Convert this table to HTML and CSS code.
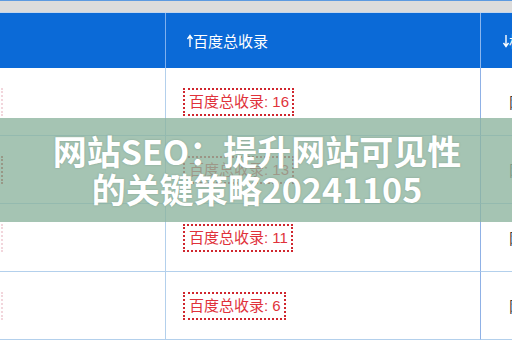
FILE: index.html
```html
<!DOCTYPE html>
<html lang="zh-CN">
<head>
<meta charset="utf-8">
<title>网站SEO</title>
<link rel="stylesheet" href="styles.css">
</head>
<body>
<div class="page">
  <div class="topbar"></div>
  <div class="table">
    <div class="cell head c1"></div>
    <div class="cell head c2"><svg class="arrow" width="6" height="14" viewBox="0 0 6 14"><path d="M3 13V2M0.5 5L3 1.5L5.5 5" fill="none" stroke="#fff" stroke-width="1.4"/></svg>百度总收录</div>
    <div class="cell head c3"><svg class="arrow" width="6" height="14" viewBox="0 0 6 14"><path d="M3 1V12M0.5 9L3 12.5L5.5 9" fill="none" stroke="#fff" stroke-width="1.4"/></svg>标题</div>

    <div class="cell c1"><span class="stub"></span></div>
    <div class="cell c2"><span class="tag">百度总收录: 16</span></div>
    <div class="cell c3"><span class="txt">网站</span></div>

    <div class="cell c1"><span class="stub strong"></span></div>
    <div class="cell c2"><span class="tag">百度总收录: 13</span></div>
    <div class="cell c3"><span class="txt">网站</span></div>

    <div class="cell c1"><span class="stub"></span></div>
    <div class="cell c2"><span class="tag">百度总收录: 11</span></div>
    <div class="cell c3"><span class="txt">网站</span></div>

    <div class="cell c1"><span class="stub"></span></div>
    <div class="cell c2"><span class="tag">百度总收录: 6</span></div>
    <div class="cell c3"><span class="txt">网站</span></div>
  </div>
  <div class="band">
    <div class="title">网站SEO：提升网站可见性<br>的关键策略20241105</div>
  </div>
</div>
</body>
</html>
```
FILE: styles.css
```css
html, body {
  margin: 0;
  padding: 0;
  background: #ffffff;
}
.page {
  position: relative;
  width: 512px;
  height: 340px;
  overflow: hidden;
  font-family: "Liberation Sans", "Noto Sans CJK SC", sans-serif;
}
.topbar {
  height: 11px;
  background: #dcdcdc;
  border-top: 1px solid #5d9ae0;
  border-bottom: 1px solid #c4d6ec;
}
.table {
  display: grid;
  grid-template-columns: 166px 315px 31px;
  grid-template-rows: 55px repeat(4, 68px);
}
.cell {
  box-sizing: border-box;
  border-right: 1px solid #b3d0ec;
  border-bottom: 1px solid #b3d0ec;
  display: flex;
  align-items: center;
  overflow: hidden;
  white-space: nowrap;
  font-size: 15px;
}
.cell.c2 { border-right-color: #8fb1e6; }
.cell.c3 { border-right: none; }
.head {
  background: #0b6ad7;
  color: #ffffff;
  border-bottom: none;
  border-right-color: #7fb0ee;
}
.head.c2 {
  padding-left: 21px;
  border-right-color: #8ab6ee;
}
.head.c3 {
  padding-left: 22px;
}
.arrow {
  flex: none;
  margin-right: 0;
}
.c2 { padding-left: 17px; }
.tag {
  display: inline-block;
  box-sizing: border-box;
  height: 28px;
  line-height: 24px;
  padding: 0 3px 0 4px;
  border: 2px dotted #d0262e;
  color: #e0323a;
  font-size: 15px;
}
.c1 { padding-left: 0; }
.stub {
  display: block;
  width: 0;
  height: 28px;
  margin-left: 1px;
  border-right: 2px dotted #f2d6dc;
}
.stub.strong {
  border-right-color: #c23a3a;
}
.c3 .txt {
  padding-left: 28px;
  color: #3a3a3a;
}
.band {
  position: absolute;
  left: 0;
  top: 118px;
  width: 512px;
  height: 104px;
  background: rgba(140, 180, 158, 0.78);
  display: flex;
  align-items: center;
  justify-content: center;
}
.title {
  font-family: "Noto Sans CJK SC", sans-serif;
  font-weight: 700;
  font-size: 34px;
  line-height: 38px;
  color: #ffffff;
  text-align: center;
  text-shadow: 0 0 2px rgba(60, 90, 70, 0.35);
  margin-left: 2px;
}
```
